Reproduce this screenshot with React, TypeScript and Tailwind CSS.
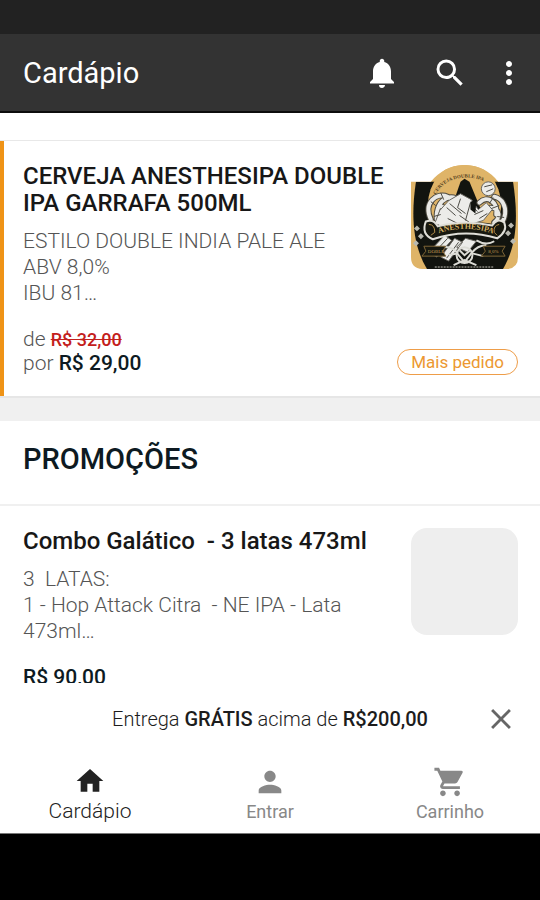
import type { ReactNode } from 'react';
import {
  MdClose,
  MdHome,
  MdMoreVert,
  MdNotifications,
  MdPerson,
  MdSearch,
  MdShoppingCart,
} from 'react-icons/md';

const navItems = [
  { label: 'Cardápio', icon: MdHome, active: true },
  { label: 'Entrar', icon: MdPerson, active: false },
  { label: 'Carrinho', icon: MdShoppingCart, active: false },
];

function BeerLabel() {
  return (
    <svg
      viewBox="0 -2 108 108"
      className="h-[107px] w-[107px]"
      role="img"
      aria-label="Cerveja Anesthesipa"
    >
      <defs>
        <clipPath id="label-shape">
          <path d="M0 17H20C29 6 41 0 54 0s26 6 34 17h20v76q0 12-12 12H12Q0 105 0 93Z" />
        </clipPath>
        <path id="label-arc" d="M25 30C35 9 69 7 82 24" />
        <path id="banner-arc" d="M28 69Q54 60 82 69" />
      </defs>
      <g clipPath="url(#label-shape)">
        <path fill="#dfb468" d="M0 0h108v108H0z" />
        <path fill="#12140f" d="M5 17h98C108 50 108 82 91 108H18C1 82 0 50 5 17Z" />
        <ellipse cx="54" cy="41" rx="37" ry="43" fill="#dfb468" />
        <path fill="#12140f" d="M6 64Q54 50 102 64L90 108H18Z" />
        <path fill="#12140f" d="m50 17 4-3 5 3 12 29-22 8-6-17Z" />

        {/* tentacles */}
        <g fill="none" stroke="#4d4a40" strokeWidth="6" strokeLinecap="round">
          <path d="M20 55C12 38 26 27 37 32s0 15-8 9M26 55c-2-22 18-30 28-14M84 32c17 4 13 31-2 32M69 38c8-8 19-1 17 12M76 44c11-4 17 7 8 14" />
        </g>
        <g fill="none" stroke="#e9e9e6" strokeWidth="4" strokeLinecap="round">
          <path d="M20 55C12 38 26 27 37 32s0 15-8 9M26 55c-2-22 18-30 28-14M84 32c17 4 13 31-2 32M69 38c8-8 19-1 17 12M76 44c11-4 17 7 8 14" />
        </g>

        {/* central figure and shaker */}
        <g fill="#ecece9" stroke="#66645d" strokeWidth="1">
          <path d="m29 46 9-10 12-7 11 6 7 10 8-7 6 7-9 11-13 4-24 4-12-5Z" />
          <circle cx="78" cy="24" r="7" />
          <path d="m34 71-16 17 8 5 15-17Zm10 3-14 19 8 4 14-19Zm11 0-9 9 11 5 9-11Z" />
        </g>
        <path
          fill="none"
          stroke="#4a4943"
          d="m36 43 9 8m-6-12 12 10m-14 5 10 5m3-25-3 9 8 6m5-11-5 18m7-14 5 5m-18 4 10 7m5-8 9-4m-4 8 8-5M74 22l8-2m-6 7 7-3M24 88l13-14m-7 16 12-14m-6 18 12-16M20 37l5 4m5-13 3 7m50-2-4 6m10 2-8 3m-58 8 7-2m57 2 7 1"
        />
        <path fill="#12140f" d="m60 37 6-2-1 14-5-4Z" />

        {/* small ornaments */}
        <g fill="none" stroke="#dcdcd5" strokeWidth="2">
          <circle cx="54" cy="91" r="8" />
          <path d="M33 83q10-1 15 8l6 7 7-9q6-8 15-8M38 91l10-2m13 0 12 3M49 86l5 5 6-5M43 101l11-5 12 5M66 76q10 6 18 1" />
        </g>
        <g fill="#b9b9b1">
          <path d="m6 61 3 3-3 3-3-3Zm4 8 3 3-3 3-3-3Zm-5 7 3 3-3 3-3-3Zm96-18 3 3-3 3-3-3Zm-3 8 3 3-3 3-3-3Zm5 8 3 3-3 3-3-3Z" />
        </g>

        <path
          d="M15 57q8-3 12 5 27-7 55-1 5-8 12-3 4 9-7 16-33-10-65 1-12-5-7-18Z"
          fill="#17180f"
          stroke="#e0dfd8"
          strokeWidth="2"
        />
        <path fill="none" stroke="#b18d49" d="M18 60q6 0 6 8l-4 3m69-11q-6 1-5 8l3 3" />
        <path
          d="M13 82h22l-3 5 3 5H11l4-5Zm60 0h22l-3 5 3 5H71l4-5Z"
          fill="#17180f"
          stroke="#806638"
        />
        <text fill="#d7b366" fontSize="8" fontWeight="700" fontFamily="Liberation Serif, serif">
          <textPath href="#banner-arc">ANESTHESIPA</textPath>
        </text>
        <text fill="#54401f" fontSize="5" fontWeight="700" fontFamily="Liberation Serif, serif">
          <textPath href="#label-arc">CERVEJA DOUBLE IPA</textPath>
        </text>
        <text x="17" y="89" fill="#c39c54" fontSize="5" fontFamily="Liberation Serif, serif">
          DOBLE
        </text>
        <text x="78" y="89" fill="#c39c54" fontSize="5" fontFamily="Liberation Serif, serif">
          8,0%
        </text>
        <path d="M24 103h59" stroke="#c5c3b9" strokeDasharray="2 1" />
      </g>
    </svg>
  );
}

interface ProductProps {
  title: string;
  description: string;
  price: ReactNode;
  image: ReactNode;
  badge?: string;
  highlighted?: boolean;
}

function Product({ title, description, price, image, badge, highlighted }: ProductProps) {
  return (
    <article
      className={`flex justify-between border-l-4 bg-white pt-[22px] pr-[22px] pb-[21px] pl-[19px] ${
        highlighted ? 'border-l-[#ef9316]' : 'border-l-white'
      }`}
    >
      <div className="min-w-0 flex-1 pr-5">
        <h3 className="text-[24px] leading-[27px] font-medium whitespace-pre-wrap text-[#171717]">
          {title}
        </h3>
        <p className="mt-[11px] max-w-[340px] text-[21px] leading-[26px] font-light whitespace-pre-wrap text-[#555]">
          {description}
        </p>
        <div className="mt-[21px] text-[21px] leading-6 font-light text-[#555]">{price}</div>
      </div>
      <div className="flex w-[107px] shrink-0 flex-col items-end justify-between">
        {image}
        {badge && (
          <span className="rounded-full border border-[#ee9d49] px-[13px] text-[17px] leading-6 whitespace-nowrap text-[#ec9831]">
            {badge}
          </span>
        )}
      </div>
    </article>
  );
}

export default function App() {
  return (
    <div className="flex h-screen flex-col overflow-hidden bg-black font-[Roboto,sans-serif]">
      <div className="h-[34px] shrink-0 bg-[#222]" />
      <header className="flex h-[79px] shrink-0 items-center border-b-2 border-[#0c0c0c] bg-[#333] pr-[13px] pl-[23px] text-white">
        <h1 className="flex-1 text-[29px] leading-8">Cardápio</h1>
        <button type="button" aria-label="Notificações">
          <MdNotifications size={36} />
        </button>
        <button type="button" aria-label="Buscar" className="ml-8">
          <MdSearch size={36} />
        </button>
        <button type="button" aria-label="Mais opções" className="ml-[23px]">
          <MdMoreVert size={36} />
        </button>
      </header>

      <main className="min-h-0 flex-1 overflow-hidden bg-white">
        <div className="h-7 border-b border-[#e8e8e8]" />
        <Product
          highlighted
          title="CERVEJA ANESTHESIPA DOUBLE IPA GARRAFA 500ML"
          description={'ESTILO DOUBLE INDIA PALE ALE\nABV 8,0%\nIBU 81…'}
          image={<BeerLabel />}
          badge="Mais pedido"
          price={
            <>
              <p>
                de{' '}
                <s className="text-[18px] leading-none font-medium text-[#c3201c]">R$ 32,00</s>
              </p>
              <p>
                por <strong className="font-medium text-[#0d1a22]">R$ 29,00</strong>
              </p>
            </>
          }
        />
        <div className="h-[25px] border-t-2 border-[#e6e6e6] bg-[#f0f0f0]" />
        <section>
          <h2 className="border-b-2 border-[#f0f0f0] px-[23px] pt-[22px] pb-[29px] text-[29px] leading-8 font-medium text-[#0d1a22]">
            PROMOÇÕES
          </h2>
          <Product
            title="Combo Galático  - 3 latas 473ml"
            description={'3  LATAS:\n1 - Hop Attack Citra  - NE IPA - Lata 473ml…'}
            image={<div className="h-[107px] w-[107px] rounded-2xl bg-[#eee]" />}
            price={<strong className="font-medium text-[#0d1a22]">R$ 90,00</strong>}
          />
        </section>
      </main>

      <footer className="shrink-0 bg-white">
        <div className="flex h-[72px] items-center pr-[22px] pl-[56px]">
          <p className="flex-1 text-center text-[20px] leading-6 font-light text-[#1c1c1c]">
            Entrega <strong className="font-medium">GRÁTIS</strong> acima de{' '}
            <strong className="font-medium">R$200,00</strong>
          </p>
          <button type="button" aria-label="Fechar" className="text-[#666]">
            <MdClose size={34} />
          </button>
        </div>
        <nav className="grid h-[79px] grid-cols-3 items-end border-b border-[#777] pb-2">
          {navItems.map(({ label, icon: Icon, active }) => (
            <a
              key={label}
              href="#"
              className={`flex flex-col items-center ${
                active
                  ? 'text-[21px] leading-7 font-light text-[#222]'
                  : 'text-[18px] leading-[26px] text-[#888]'
              }`}
            >
              <Icon size={active ? 32 : 34} />
              {label}
            </a>
          ))}
        </nav>
      </footer>
      <div className="h-[66px] shrink-0 bg-black" />
    </div>
  );
}
